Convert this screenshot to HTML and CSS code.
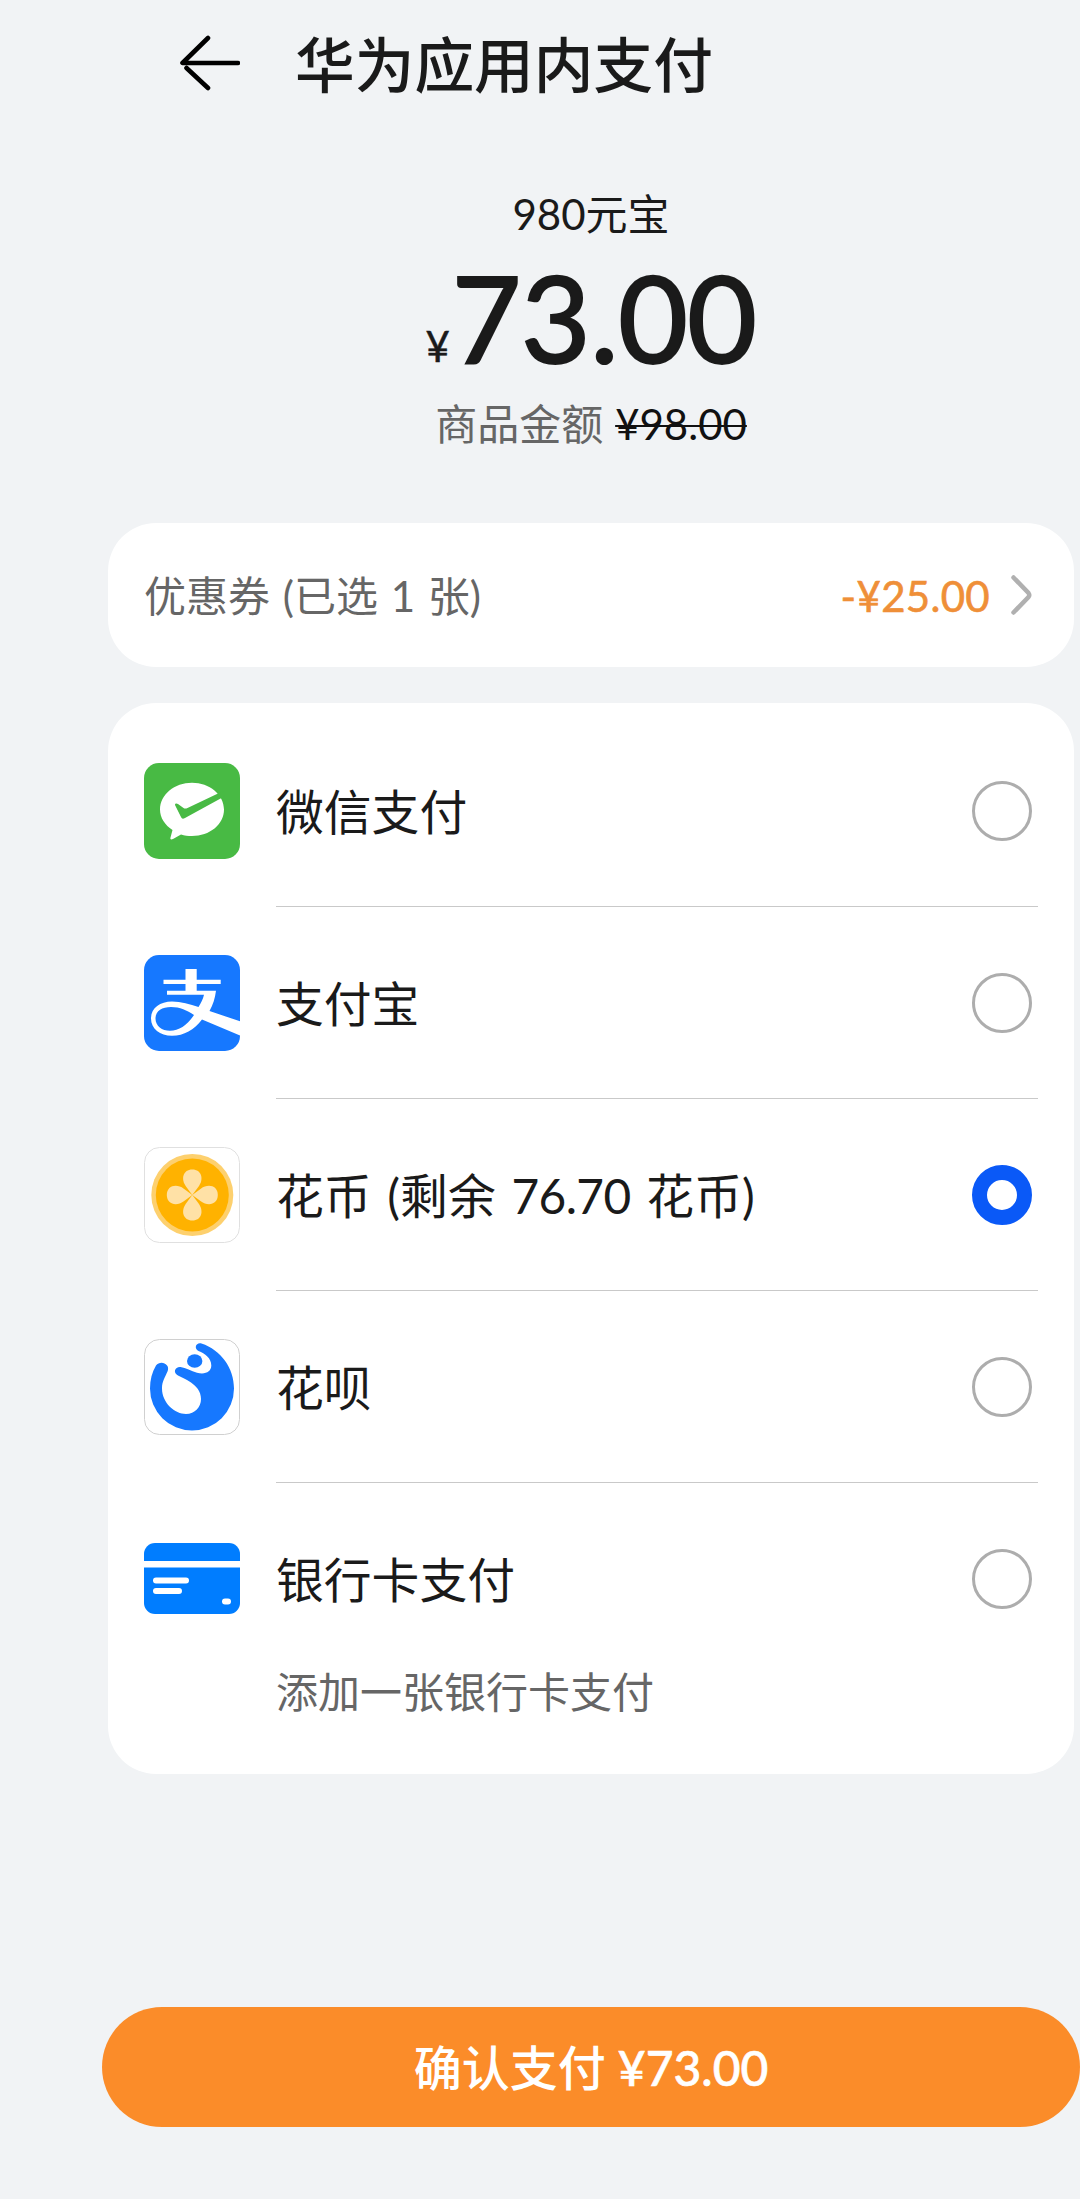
FILE: index.html
```html
<!DOCTYPE html>
<html lang="zh-CN">
<head>
<meta charset="utf-8">
<title>华为应用内支付</title>
<link rel="stylesheet" href="styles.css">
</head>
<body>
<div class="page">
  <header class="header">
    <svg class="back" viewBox="0 0 60 56" aria-label="返回"><path d="M28 3 2.500 28H58M6.500 33 28 53"/></svg>
    <h1 class="title">华为应用内支付</h1>
  </header>

  <section class="summary">
    <div class="product">980元宝</div>
    <div class="price"><span class="currency">¥</span><span class="amount">73.00</span></div>
    <div class="original"><span>商品金额</span><span class="struck">¥98.00</span></div>
  </section>

  <section class="card coupon">
    <span class="coupon-label">优惠券 (已选 1 张)</span>
    <span class="coupon-value">-¥25.00</span>
    <svg class="chevron" viewBox="0 0 21 40"><path d="M2.500 2.500 17.500 18Q19 20 17.500 22L2.500 37.500"/></svg>
  </section>

  <section class="card methods">
    <div class="method">
      <svg class="icon" viewBox="0 0 96 96">
        <rect width="96" height="96" rx="15" fill="#48ba44"/>
        <path fill="#fff" d="M48 19.700C65.500 19.700 80 31.500 80 46.500S65.500 73 48 73C44 73 40.500 72.500 37 71.500L29 76C27 77 26 76.500 26.500 74.500L28.500 67C21 62 16 55 16 46.500C16 31.500 30.500 19.700 48 19.700Z"/>
        <path fill="#48ba44" d="M31 42C30.700 40.500 32.500 40 34 41L39.500 45Q41 46 43.500 45L74 30.500 81 28V32.500L77.500 35 41 55C39 56 38 56 37 54Z"/>
      </svg>
      <div class="name">微信支付</div>
      <span class="radio"></span>
    </div>
    <div class="method">
      <svg class="icon" viewBox="0 0 96 96">
        <rect width="96" height="96" rx="15" fill="#1678ff"/>
        <path fill="#fff" d="M41.500 14H52.700V24.700H76.700V29H52.700V37H41.500V29H19.500V24.700H41.500Z"/>
        <path fill="#fff" fill-rule="evenodd" d="M23 35.700H72C71 43 69 50 65.500 56L96 66.300V80.500L58 64.500C50 75 40 80.700 28 80.700C16 80.700 7 74 7 63.500C7 53 16 46.500 28 46.500C37 46.500 46 49 54.500 52C57 48 59 44 60 39.700H23ZM50 60C43 55.500 36 52 27 52C18 52 11.500 56 11.500 63.500C11.500 71 18 75.800 26 75.800C35 75.800 43.500 70 50 60Z"/>
      </svg>
      <div class="name">支付宝</div>
      <span class="radio"></span>
    </div>
    <div class="method">
      <svg class="icon" viewBox="0 0 96 96">
        <rect x=".5" y=".5" width="95" height="95" rx="15" fill="#fff" stroke="#e0e0e0"/>
        <circle cx="48.300" cy="48" r="41" fill="#fdd06e"/>
        <circle cx="48.300" cy="48" r="36.500" fill="#ffb200"/>
        <g fill="#ffe1a6">
          <path id="petal" d="M48.300 48 42 39.500C36.500 32 39 22.500 48.300 22.500S60.100 32 54.600 39.500Z"/>
          <use href="#petal" transform="rotate(90 48.300 48)"/>
          <use href="#petal" transform="rotate(180 48.300 48)"/>
          <use href="#petal" transform="rotate(270 48.300 48)"/>
        </g>
      </svg>
      <div class="name">花币 (剩余 <span class="balance">76.70</span> 花币)</div>
      <span class="radio radio-on"></span>
    </div>
    <div class="method">
      <svg class="icon" viewBox="0 0 96 96">
        <rect x=".5" y=".5" width="95" height="95" rx="15" fill="#fff" stroke="#d0d0d0"/>
        <path fill="#1678ff" d="M57.500 4.500C77 11 90 29 90 49.500A42 42 0 0 1 6 49.500C6 41 8 33 12 26.500C16.500 20.500 26.500 25 23.700 32C21 38.500 18 42 18 49.500C18 64 31 75 42 75C51 75 57 68 57 60C57 52 52 47 47 43.500C42 40 38 38.500 34 36.500C28.500 33.500 31 27.500 36.500 28C42 29 47 32 53 33.700C61 35.800 67.300 33 67.300 26.500C67.300 19 61 14.500 54.500 12C49.500 9.500 52 3 57.500 4.500Z"/>
        <ellipse cx="50.700" cy="22" rx="7.700" ry="6.700" fill="#1678ff"/>
      </svg>
      <div class="name">花呗</div>
      <span class="radio"></span>
    </div>
    <div class="method method-last">
      <svg class="icon" viewBox="0 0 96 96">
        <rect y="12" width="96" height="71" rx="11" fill="#007dff"/>
        <path fill="#fff" d="M0 30H96V36.500H0Z"/>
        <path stroke="#fff" stroke-width="6" stroke-linecap="round" d="M12 49.500H42M12 60H35M81 70.500H84"/>
      </svg>
      <div class="name">银行卡支付</div>
      <span class="radio"></span>
    </div>
    <div class="hint">添加一张银行卡支付</div>
  </section>

  <button class="confirm" type="button">确认支付 <span class="medium">¥73.00</span></button>
</div>
</body>
</html>
```
FILE: styles.css
```css
* { box-sizing: border-box; margin: 0; }

body {
  background: #f1f3f5;
  color: #1a1a1a;
  font-family: Lato, "Noto Sans CJK SC", sans-serif;
}

.page {
  display: flex;
  flex-direction: column;
  height: 2199px;
  padding-left: 102px;
  white-space: nowrap;
}

svg { display: block; flex: none; }

.header {
  display: flex;
  align-items: center;
  gap: 55px;
  height: 130px;
  padding-left: 78px;
}

.back { width: 60px; height: 56px; margin-bottom: 5px; }
.back path { fill: none; stroke: #000; stroke-width: 4.6; stroke-linecap: round; stroke-linejoin: round; }

.title { font-size: 59.700px; font-weight: 500; line-height: 130px; }

.summary {
  display: flex;
  flex-direction: column;
  align-items: center;
  height: 393px;
  padding-top: 54px;
  line-height: 60px;
  font-size: 42px;
}

.price { display: flex; align-items: baseline; height: 152px; line-height: 152px; margin-top: -3px; }
.currency { position: relative; top: -1px; margin-right: 2px; -webkit-text-stroke: .5px; }
.amount { font-size: 120px; letter-spacing: -.4px; -webkit-text-stroke: 2.200px; }
.original { display: flex; gap: 12px; margin-top: 1px; color: #666; }
.struck { color: #111; text-decoration: line-through; text-decoration-thickness: 2px; }

.card { margin: 0 6px; background: #fff; border-radius: 48px; flex: none; }

.coupon {
  display: flex;
  align-items: center;
  height: 144px;
  padding: 0 42px 0 36px;
  font-size: 42px;
}

.coupon-label { color: #666; word-spacing: 2px; margin-bottom: 3px; }
.coupon-value { margin-left: auto; padding-top: 2px; color: #ef8f38; letter-spacing: .3px; -webkit-text-stroke: .6px; }
.chevron { width: 21px; height: 40px; margin-left: 21px; }
.chevron path { fill: none; stroke: #b0b0b0; stroke-width: 4.500; stroke-linecap: round; }

.methods { margin-top: 36px; height: 1071px; padding: 12px 36px 0; }

.method {
  display: grid;
  grid-template-columns: 96px 1fr 60px;
  column-gap: 36px;
  align-items: center;
  height: 192px;
  padding-right: 6px;
  background: linear-gradient(#c9c9c9, #c9c9c9) right bottom / 762px 1px no-repeat;
}

.method-last { background: none; }
.icon { width: 96px; height: 96px; }
.name { padding-top: 2px; font-size: 47.800px; line-height: 70px; word-spacing: 3.500px; }
.balance { letter-spacing: -.6px; }
.radio { width: 60px; height: 60px; border: 3px solid #adadad; border-radius: 50%; }
.radio-on { border: 15px solid #0a59f7; }

.hint { padding-left: 132px; margin-top: -13px; color: #666; font-size: 42px; line-height: 60px; }

.confirm {
  height: 120px;
  flex: none;
  margin-top: 233px;
  padding-top: 3px;
  border: 0;
  border-radius: 60px;
  background: #fb8c29;
  color: #fff;
  font: 500 48px/70px Lato, "Noto Sans CJK SC", sans-serif;
}
.medium { -webkit-text-stroke: .6px; }
```
